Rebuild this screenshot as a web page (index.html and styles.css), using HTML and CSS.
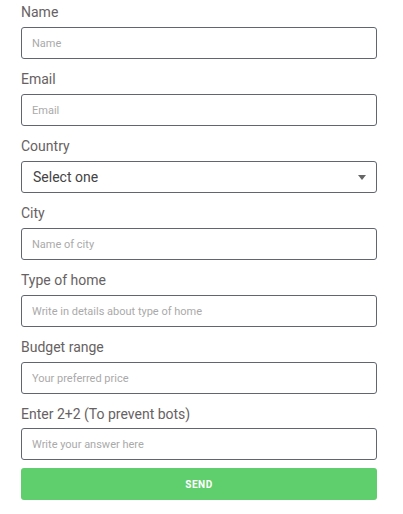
FILE: index.html
```html
<!DOCTYPE html>
<html>
<head>
<meta charset="utf-8">
<link rel="stylesheet" href="styles.css">
</head>
<body>
<form class="form">
  <div class="field">
    <label class="label">Name</label>
    <input class="input" type="text" placeholder="Name">
  </div>
  <div class="field">
    <label class="label">Email</label>
    <input class="input" type="text" placeholder="Email">
  </div>
  <div class="field">
    <label class="label">Country</label>
    <div class="select">
      <span class="select-text">Select one</span>
      <span class="caret"></span>
    </div>
  </div>
  <div class="field">
    <label class="label">City</label>
    <input class="input" type="text" placeholder="Name of city">
  </div>
  <div class="field">
    <label class="label">Type of home</label>
    <input class="input" type="text" placeholder="Write in details about type of home">
  </div>
  <div class="field">
    <label class="label">Budget range</label>
    <input class="input" type="text" placeholder="Your preferred price">
  </div>
  <div class="field last">
    <label class="label">Enter 2+2 (To prevent bots)</label>
    <input class="input" type="text" placeholder="Write your answer here">
  </div>
  <button class="send" type="button">SEND</button>
</form>
</body>
</html>
```

FILE: styles.css
```css
html, body {
  margin: 0;
  padding: 0;
  background: #ffffff;
}
body {
  font-family: Roboto, "Liberation Sans", sans-serif;
}
.form {
  width: 356px;
  margin: 0 0 0 21px;
  padding-top: 2px;
  display: flex;
  flex-direction: column;
}
.field {
  display: flex;
  flex-direction: column;
  margin-bottom: 10px;
}
.field.last {
  margin-bottom: 8px;
}
.label {
  display: block;
  font-size: 14px;
  line-height: 20px;
  color: #676262;
  margin-bottom: 5px;
}
.field.last .label {
  margin-bottom: 4px;
}
.input {
  box-sizing: border-box;
  width: 100%;
  height: 32px;
  border: 1px solid #5f6672;
  border-radius: 3px;
  padding: 0 10px;
  font-family: Roboto, "Liberation Sans", sans-serif;
  font-size: 11px;
  color: #333;
  background: #fff;
  outline: none;
}
.input::placeholder {
  color: #aaaaaa;
}
.select {
  box-sizing: border-box;
  height: 32px;
  border: 1px solid #5f6672;
  border-radius: 3px;
  padding: 0 10px 0 11px;
  display: flex;
  align-items: center;
  justify-content: space-between;
}
.select-text {
  font-size: 14px;
  color: #444444;
}
.caret {
  width: 0;
  height: 0;
  border-left: 4.5px solid transparent;
  border-right: 4.5px solid transparent;
  border-top: 5px solid #666;
  margin-top: 1px;
}
.send {
  box-sizing: border-box;
  width: 100%;
  height: 32px;
  border: none;
  border-radius: 3px;
  background: #5fce6d;
  color: #ffffff;
  font-family: Roboto, "Liberation Sans", sans-serif;
  font-weight: 700;
  font-size: 10px;
  letter-spacing: 0.5px;
  padding: 0;
}
```
